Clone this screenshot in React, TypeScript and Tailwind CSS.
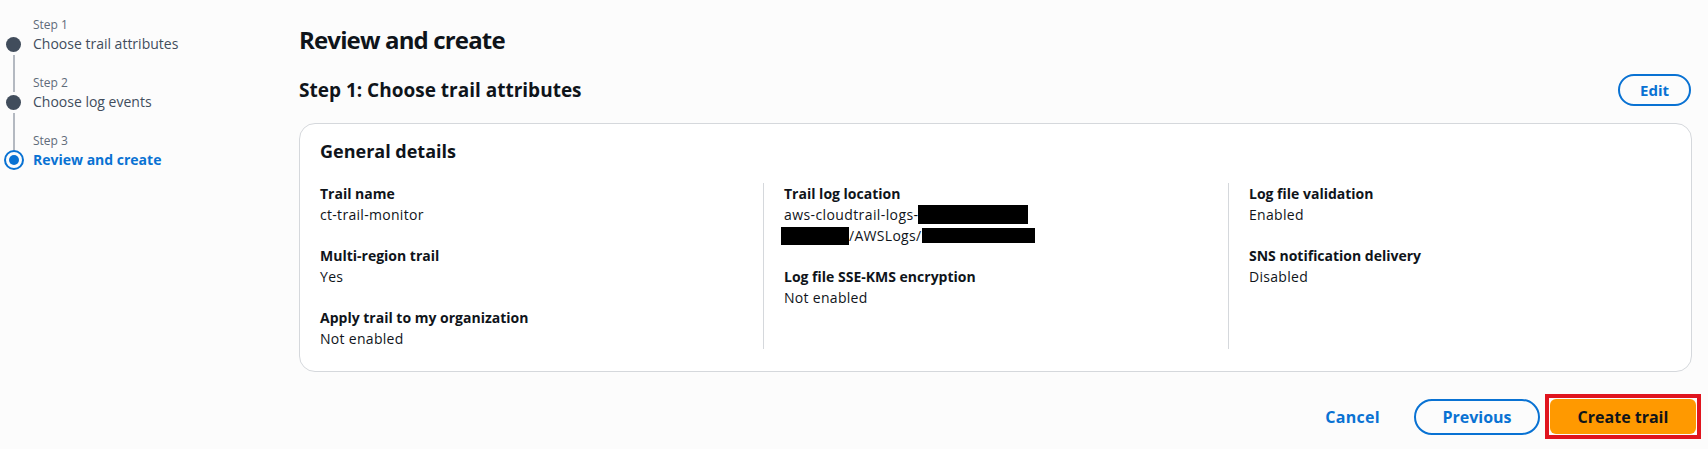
import React from "react";

const steps = [
  { label: "Step 1", title: "Choose trail attributes", state: "done" },
  { label: "Step 2", title: "Choose log events", state: "done" },
  { label: "Step 3", title: "Review and create", state: "active" },
];

function Redacted({ className }: { className: string }) {
  return <span className={`inline-block bg-black align-middle ${className}`} />;
}

function Field({ label, children }: { label: string; children: React.ReactNode }) {
  return (
    <div className="flex flex-col">
      <div className="text-[14px] leading-[21px] font-bold text-[#0f141a]">{label}</div>
      <div className="text-[14px] leading-[21px] text-[#0f141a] tracking-[0.3px]">{children}</div>
    </div>
  );
}

export default function App() {
  return (
    <div
      className="w-[1708px] h-[449px] bg-[#fcfcfc] flex overflow-hidden"
      style={{ fontFamily: '"Open Sans", "Liberation Sans", sans-serif' }}
    >
      {/* Wizard navigation */}
      <nav className="w-[299px] shrink-0 pt-[15px]">
        {steps.map((step, i) => (
          <div key={step.label} className="flex">
            <div className="w-[27px] flex flex-col items-center shrink-0">
              <div className={`h-[19px] w-[2px] ${i > 0 ? "bg-[#b4b9c1]" : ""}`} />
              <div className="h-[20px] flex items-center justify-center">
                {step.state === "active" ? (
                  <div className="w-[20px] h-[20px] rounded-full border-[2px] border-[#0972d3] flex items-center justify-center">
                    <div className="w-[10px] h-[10px] rounded-full bg-[#0972d3]" />
                  </div>
                ) : (
                  <div className="w-[15px] h-[15px] rounded-full bg-[#414d5c]" />
                )}
              </div>
              {i < steps.length - 1 && <div className="flex-1 w-[2px] bg-[#b4b9c1] mt-[1px]" />}
            </div>
            <div className={`pl-[6px] flex flex-col ${i < steps.length - 1 ? "pb-[19px]" : ""}`}>
              <span className="text-[12px] leading-[19px] text-[#5f6b7a]">{step.label}</span>
              <span
                className={`text-[14px] leading-[20px] ${
                  step.state === "active" ? "font-bold text-[#0972d3]" : "text-[#414d5c]"
                }`}
              >
                {step.title}
              </span>
            </div>
          </div>
        ))}
      </nav>

      {/* Main content */}
      <main className="flex-1 pr-[16px] pt-[25px] flex flex-col">
        <h1 className="text-[24px] leading-[30px] font-bold text-[#0f141a] tracking-[-0.85px]">Review and create</h1>

        <div className="mt-[19px] h-[32px] flex items-center justify-between">
          <h2 className="text-[19px] leading-[24px] font-bold text-[#0f141a]">Step 1: Choose trail attributes</h2>
          <button className="w-[73px] h-[32px] rounded-full border-[2px] border-[#0972d3] text-[15px] font-bold text-[#0972d3] mr-[1px]">
            Edit
          </button>
        </div>

        {/* General details container */}
        <section className="mt-[17px] bg-white border border-[#d5d8dc] rounded-[16px] px-[20px] pt-[15px] pb-[22px]">
          <h3 className="text-[18px] leading-[24px] font-bold text-[#0f141a]">General details</h3>
          <div className="mt-[20px] grid grid-cols-[443px_465px_1fr]">
            <div className="flex flex-col gap-[20px]">
              <Field label="Trail name">ct-trail-monitor</Field>
              <Field label="Multi-region trail">Yes</Field>
              <Field label="Apply trail to my organization">Not enabled</Field>
            </div>
            <div className="border-l border-[#d5d8dc] pl-[20px] flex flex-col gap-[20px]">
              <Field label="Trail log location">
                <div className="flex items-center h-[21px] tracking-[0.4px]">
                  aws-cloudtrail-logs-
                  <Redacted className="w-[110px] h-[19px]" />
                </div>
                <div className="flex items-center h-[21px] -ml-[3px]">
                  <Redacted className="w-[68px] h-[18px]" />
                  /AWSLogs/
                  <Redacted className="w-[113px] h-[15px] ml-[1px]" />
                </div>
              </Field>
              <Field label="Log file SSE-KMS encryption">Not enabled</Field>
            </div>
            <div className="border-l border-[#d5d8dc] pl-[20px] flex flex-col gap-[20px]">
              <Field label="Log file validation">Enabled</Field>
              <Field label="SNS notification delivery">Disabled</Field>
            </div>
          </div>
        </section>

        {/* Actions */}
        <div className="mt-[22px] flex items-center justify-end -mr-[9px]">
          <button className="px-[18px] h-[36px] text-[16px] font-bold text-[#0972d3] tracking-[0.3px]">Cancel</button>
          <button className="ml-[16px] w-[126px] h-[36px] rounded-full border-[2px] border-[#0972d3] text-[16px] font-bold text-[#0972d3]">
            Previous
          </button>
          <div className="ml-[5px] border-[4px] border-[#e0141e] p-[1px]">
            <button className="w-[146px] h-[35px] rounded-[6px] bg-[#ff9900] text-[16px] font-bold text-[#0f141a]">
              Create trail
            </button>
          </div>
        </div>
      </main>
    </div>
  );
}
